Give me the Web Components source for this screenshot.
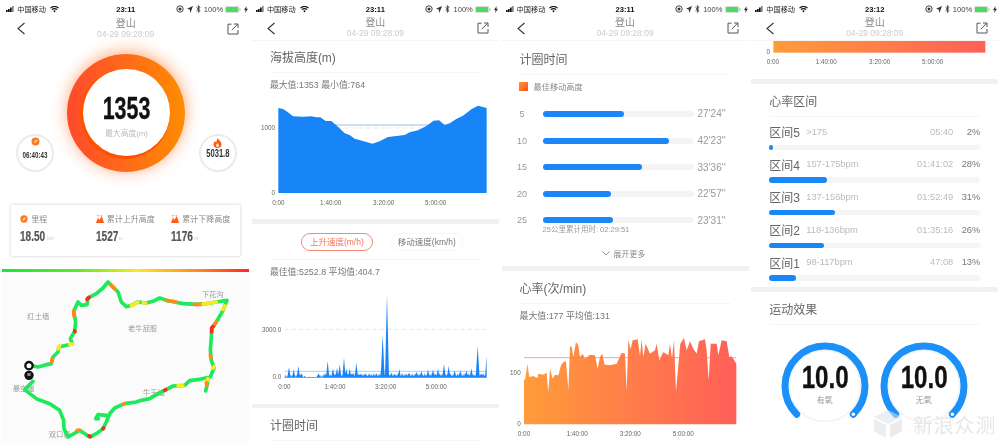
<!DOCTYPE html>
<html lang="zh">
<head>
<meta charset="utf-8">
<title>登山</title>
<style>
    html, body { margin: 0; height: 100%; background: #fff; overflow: hidden; }
    body { font-family: "Liberation Sans", "Noto Sans CJK SC", sans-serif; }
</style>
</head>
<body>
<workout-page>
    <phone-screen time="23:11">
        <summary-hero></summary-hero>
        <stat-card></stat-card>
        <route-map></route-map>
    </phone-screen>

    <phone-screen time="23:11" line>
        <section-head style="margin-top:-1px">海拔高度(m)</section-head>
        <stat-line>最大值:1353 最小值:764</stat-line>
        <chart-svg kind="altitude" vx="7" vy="294" vh="363"></chart-svg>
        <gray-band></gray-band>
        <speed-tabs></speed-tabs>
        <stat-line>最佳值:5252.8 平均值:404.7</stat-line>
        <chart-svg kind="speed" vx="7" vy="189" vh="358"></chart-svg>
        <gray-band></gray-band>
        <section-head>计圈时间</section-head>
    </phone-screen>

    <phone-screen time="23:11" line>
        <section-head style="margin-top:1px">计圈时间</section-head>
        <lap-legend>最佳移动高度</lap-legend>
        <div style="margin-top:3.7px">
            <lap-row km="5" pct="54" time="27'24''"></lap-row>
            <lap-row km="10" pct="84" time="42'23''"></lap-row>
            <lap-row km="15" pct="66" time="33'36''"></lap-row>
            <lap-row km="20" pct="45.5" time="22'57''"></lap-row>
            <lap-row km="25" pct="46.5" time="23'31''"></lap-row>
        </div>
        <lap-note>25公里累计用时: 02:29:51</lap-note>
        <more-link>展开更多</more-link>
        <gray-band></gray-band>
        <section-head>心率(次/min)</section-head>
        <stat-line>最大值:177 平均值:131</stat-line>
        <chart-svg kind="heart" vx="6" vy="321" vh="342"></chart-svg>
    </phone-screen>

    <phone-screen time="23:12" line>
        <chart-svg kind="strip" vx="4" vy="123" vh="114"></chart-svg>
        <gray-band></gray-band>
        <section-head>心率区间</section-head>
        <zone-row name="区间5" range="&gt;175" time="05:40" pct="2" fill="3.5"></zone-row>
        <zone-row name="区间4" range="157-175bpm" time="01:41:02" pct="28" fill="58"></zone-row>
        <zone-row name="区间3" range="137-156bpm" time="01:52:49" pct="31" fill="65.7"></zone-row>
        <zone-row name="区间2" range="118-136bpm" time="01:35:16" pct="26" fill="55"></zone-row>
        <zone-row name="区间1" range="98-117bpm" time="47:08" pct="13" fill="27"></zone-row>
        <gray-band style="margin-top:7.3px"></gray-band>
        <section-head>运动效果</section-head>
        <gauge-row></gauge-row>
    </phone-screen>
    <water-mark>新浪众测</water-mark>
</workout-page>

<script>
const NUM_FONT = `font-weight:700;color:#111;display:inline-block;-webkit-text-stroke:.35px #111;`;

class WorkoutPage extends HTMLElement{
    constructor(){
        super();
        this.attachShadow({mode: "open"});
        this.shadowRoot.innerHTML = `
            <style>
                :host{
                    display: flex;
                    gap: 2.7px;
                    padding-left: 2.2px;
                    width: 1000px;
                    height: 443px;
                    box-sizing: border-box;
                    overflow: hidden;
                    position: relative;
                    filter: blur(.35px);
                }
            </style>
            <slot></slot>
        `;
    }
}
customElements.define("workout-page", WorkoutPage);

class PhoneScreen extends HTMLElement{
    constructor(){
        super();
        this.attachShadow({mode: "open"});
        const line = this.hasAttribute("line") ? "border-bottom:1px solid #f5f5f5;" : "";
        this.shadowRoot.innerHTML = `
            <style>
                :host{
                    display: flex;
                    flex-direction: column;
                    flex: 0 0 247px;
                    width: 247px;
                    height: 443px;
                    overflow: hidden;
                }
                .status{
                    flex: 0 0 18px;
                    display: grid;
                    grid-template-columns: 1fr auto 1fr;
                    align-items: center;
                    font-size: 7.2px;
                    color: #222;
                }
                .left{ display: flex; align-items: center; padding-left: 4px; gap: 3px; }
                .clock{ font-weight: 700; font-size: 7.6px; color: #111; }
                .right{ display: flex; align-items: center; justify-content: flex-end; gap: 3px; padding-right: 1px; font-size: 7.6px; color: #444; }
                .nav{
                    flex: 0 0 23px;
                    box-sizing: border-box;
                    height: 23px;
                    display: grid;
                    grid-template-columns: 40px 1fr 40px;
                    align-items: center;
                    ${line}
                }
                .back{ padding-left: 14px; margin-top: -2px; }
                .share{ padding-left: 18px; margin-top: -2px; }
                .title{ text-align: center; line-height: 11px; margin-top: -2px; }
                .title b{ display: block; font-weight: 400; font-size: 10px; color: #888; }
                .title span{ display: block; font-size: 8.5px; line-height: 11px; color: #ccc; }
                svg{ display: block; }
            </style>
            <div class="status">
                <div class="left">
                    <svg width="8" height="6" viewBox="0 0 8 6"><path d="M0 4h1.700v2H0zM2 3h1.700v3H2zM4 1.500h1.700V6H4z" fill="#111"/><path d="M6 0h1.700v6H6z" fill="#888"/></svg>
                    <span>中国移动</span>
                    <svg style="margin-left:1px" width="9" height="7" viewBox="0 0 9 7"><path d="M.5 2.200a5.600 5.600 0 0 1 8 0M2 3.700a3.500 3.500 0 0 1 5 0" fill="none" stroke="#111" stroke-width="1.200"/><path d="M3.300 4.900a1.700 1.700 0 0 1 2.400 0L4.500 6.500z" fill="#111"/></svg>
                </div>
                <div class="clock">${this.getAttribute("time")}</div>
                <div class="right">
                    <svg width="8" height="8" viewBox="0 0 8 8"><circle cx="4" cy="4" r="3.200" fill="none" stroke="#333" stroke-width=".9"/><circle cx="4" cy="4" r="1.500" fill="#333"/></svg>
                    <svg width="6" height="7" viewBox="0 0 6 7"><path d="M6 0 3.400 7 2.700 3.500 0 2.800z" fill="#333"/></svg>
                    <svg width="5" height="8" viewBox="0 0 5 8"><path d="M.5 2.200 4 5.500 2.400 7.400V.6L4 2.500.5 5.800" fill="none" stroke="#333" stroke-width=".9"/></svg>
                    <span>100%</span>
                    <svg style="margin-left:-1px" width="16" height="7" viewBox="0 0 16 7"><rect x=".3" y=".3" width="13.600" height="6.400" rx="1.400" fill="#fff" stroke="#aaa" stroke-width=".5"/><rect x="1" y="1" width="12.200" height="5" rx=".8" fill="#4cd964"/><rect x="14.400" y="2.300" width="1" height="2.400" fill="#aaa"/></svg>
                    <svg width="4" height="7" viewBox="0 0 4 7"><path d="M2.600 0 0 4h1.500L1.200 7 4 2.800H2.300z" fill="#333"/></svg>
                </div>
            </div>
            <div class="nav">
                <div class="back"><svg width="10" height="13" viewBox="0 0 10 13"><path d="M8.500 1 2 6.500 8.500 12" fill="none" stroke="#333" stroke-width="1.100"/></svg></div>
                <div class="title"><b>登山</b><span>04-29 09:28:09</span></div>
                <div class="share"><svg width="12" height="12" viewBox="0 0 12 12"><path d="M4.500 1.200H1v9.800h10V7" fill="none" stroke="#555" stroke-width="1"/><path d="M4.800 7.200 10.500 1.300M7 1h4v4" fill="none" stroke="#555" stroke-width="1"/></svg></div>
            </div>
            <slot></slot>
        `;
    }
}
customElements.define("phone-screen", PhoneScreen);

class SummaryHero extends HTMLElement{
    constructor(){
        super();
        this.attachShadow({mode: "open"});
        this.shadowRoot.innerHTML = `
            <style>
                :host{
                    display: flex;
                    align-items: flex-end;
                    gap: 13.300px;
                    padding: 12.600px 0 0 14px;
                }
                .ring{
                    flex: 0 0 118px;
                    height: 118px;
                    border-radius: 50%;
                    background: linear-gradient(90deg, #ff4a2c, #ff6a18 50%, #ff8c00);
                    box-shadow: 0 0 16px rgba(255,110,40,.45), 2px -6px 14px rgba(255,170,110,.3);
                    display: flex;
                    align-items: center;
                    justify-content: center;
                }
                .inner{
                    width: 87px;
                    height: 87px;
                    border-radius: 50%;
                    background: #fff;
                    box-shadow: -1.500px 1.500px 0 1.500px #ff5200;
                    box-sizing: border-box;
                    padding-top: 23.700px;
                    text-align: center;
                }
                .num{ font-size: 31px; line-height: 32px; transform: scaleX(.69); ${NUM_FONT} }
                .lab{ font-size: 7.800px; line-height: 10px; color: #bbb; margin-top: 4px; }
                .mini{
                    flex: 0 0 38px;
                    width: 38px;
                    min-width: 0;
                    height: 38px;
                    box-sizing: border-box;
                    border: 2px solid #ebebeb;
                    border-radius: 50%;
                    background: #fff;
                    display: flex;
                    flex-direction: column;
                    align-items: center;
                    justify-content: center;
                    white-space: nowrap;
                }
                .mini span{ flex: none; font-weight: 700; color: #333; display: inline-block; transform: scaleX(.69); }
                .t{ font-size: 9px; line-height: 10px; margin-top: 3.500px; }
                .c{ font-size: 11px; line-height: 11px; }
                .up{ padding-bottom: 8px; }
                .up2{ padding-bottom: 9px; }
            </style>
            <div class="mini up">
                <svg width="9" height="9" viewBox="0 0 9 9"><circle cx="4.500" cy="4.500" r="4" fill="#ff7a1e"/><path d="M6.500 2.500 5 5.200 3 6l.9-2.300z" fill="#ffe2c8"/></svg>
                <span class="t">06:40:43</span>
            </div>
            <div class="ring">
                <div class="inner">
                    <span class="num">1353</span>
                    <div class="lab">最大高度(m)</div>
                </div>
            </div>
            <div class="mini up2">
                <svg width="9" height="10" viewBox="0 0 9 10"><path d="M4.800 0C5.300 2 8.500 3.400 8.500 6.300A4 3.700 0 0 1 .5 6.300C.5 4.800 1.400 3.800 2 3c.4.800.7 1.200 1.200 1.400C3.400 3 3.900 1.300 4.800 0Z" fill="#ff5a1e"/><path d="M4.500 5c.4.800 1.500 1.200 1.500 2.500a1.500 1.500 0 0 1-3 0C3 6.400 4 6 4.500 5Z" fill="#ffe0c0"/></svg>
                <span class="c">5031.8</span>
            </div>
        `;
    }
}
customElements.define("summary-hero", SummaryHero);

class StatCard extends HTMLElement{
    constructor(){
        super();
        this.attachShadow({mode: "open"});
        const peak = `<svg width="8" height="8" viewBox="0 0 8 8"><path d="M0 8 2 2.500 3.400 5 4 4 5.800 1 8 8Z" fill="#ff5a14"/><path d="M.5 0 2 2 3 0ZM4 0l1 1.500L6.500 0Z" fill="#ff9a30" opacity=".8"/></svg>`;
        const item = (icon, label, value, unit, w) => `
            <div class="item">
                <div class="label">${icon}<span>${label}</span></div>
                <div class="value"><b style="width:${w}px">${value}</b><i>${unit}</i></div>
            </div>`;
        this.shadowRoot.innerHTML = `
            <style>
                :host{
                    display: grid;
                    grid-template-columns: 75.500px 75.500px 1fr;
                    flex: none;
                    margin: 33.400px 9px 0;
                    height: 51px;
                    box-sizing: border-box;
                    padding: 9px 0 0 9px;
                    background: #fff;
                    box-shadow: 0 0 3px rgba(0,0,0,.22);
                }
                .label{ display: flex; align-items: center; gap: 3px; font-size: 8px; line-height: 11px; color: #888; white-space: nowrap; }
                .value{ margin-top: 4px; line-height: 14px; white-space: nowrap; display: flex; align-items: flex-end; }
                b{ display: inline-block; font-size: 14px; color: #555; transform: scaleX(.72); transform-origin: left; -webkit-text-stroke: .2px #555; }
                i{ font-style: normal; font-size: 5px; line-height: 10px; color: #ccc; margin-left: 1px; }
            </style>
            ${item(`<svg width="8" height="8" viewBox="0 0 8 8"><circle cx="4" cy="4" r="3.700" fill="#ff7a1e"/><path d="M5.800 2.200 4.600 4.700 2.400 5.700l.9-2.300z" fill="#ffe2c8"/></svg>`, "里程", "18.50", "km", 26)}
            ${item(peak, "累计上升高度", "1527", "m", 22)}
            ${item(peak, "累计下降高度", "1176", "m", 22)}
        `;
    }
}
customElements.define("stat-card", StatCard);

class RouteMap extends HTMLElement{
    constructor(){
        super();
        this.attachShadow({mode: "open"});
        const route = "100,432 115,435 140,428 155,425 160,405 175,390 178,375 200,370 218,366 212,350 225,328 228,300 222,268 235,240 245,250 262,248 265,228 290,215 310,198 325,180 340,195 355,210 365,240 380,254 395,250 415,240 440,243 460,238 480,228 500,235 525,240 550,245 590,247 620,245 650,240 682,235 670,265 650,300 636,320 635,345 632,385 635,415 643,438 632,465 600,472 570,476 555,490 520,492 495,505 475,515 450,530 425,535 410,540 375,545 345,558 330,575 320,600 310,620 290,635 270,645 240,625 205,645 193,620 192,595 180,565 150,545 110,530 75,503 100,478";
        // bits of the track where the pace colour changes
        const marks = [
            ["#ff2a1a", "262,232 268,226"], ["#ff2a1a", "636,330 636,318 643,310"], ["#ff2a1a", "495,505 498,503"],
            ["#ff2a1a", "225,327 226,329"], ["#ff2a1a", "310,620 312,618"], ["#ff2a1a", "268,642 272,644"],
            ["#ff8a1a", "335,190 345,200"], ["#ff8a1a", "520,238 530,241"], ["#ff8a1a", "585,247 605,247"], ["#ff8a1a", "650,300 645,306"],
            ["#ff8a1a", "158,410 156,420"], ["#ff8a1a", "632,400 634,408"], ["#ff8a1a", "375,545 370,547"], ["#ff8a1a", "222,268 223,282"],
            ["#ffe81a", "610,246 650,240"], ["#ffe81a", "395,250 415,241"], ["#ffe81a", "430,242 438,243"], ["#ffe81a", "535,490 550,492"],
            ["#ffe81a", "640,438 643,434"], ["#ffe81a", "670,262 676,252"], ["#ffe81a", "210,367 218,366"], ["#ffe81a", "175,380 180,372"],
            ["#ffe81a", "620,480 625,470"], ["#ff8a1a", "622,490 620,482"], ["#ff8a1a", "500,235 510,237"], ["#ff8a1a", "232,625 240,625"]
        ];
        const label = (x, y, t) => `<text x="${x}" y="${y}">${t}</text>`;
        this.shadowRoot.innerHTML = `
            <style>
                :host{ display: block; flex: none; padding-top: 13.300px; }
                .legend{ height: 2.500px; background: linear-gradient(90deg, #14e83a, #5ee82a 30%, #ffe81a 55%, #ff8f1a 78%, #ff2626); }
                svg{ display: block; background: #fbfbfb; }
                text{ font-size: 22px; fill: #999; font-family: "Liberation Sans", "Noto Sans CJK SC", sans-serif; }
                polyline{ fill: none; stroke-linecap: round; stroke-linejoin: round; stroke-width: 11; }
            </style>
            <div class="legend"></div>
            <svg width="247" height="171" viewBox="7 150 741 513">
                ${label(83, 292, "红土墙")}
                ${label(385, 326, "老牛屁股")}
                ${label(606, 224, "下花沟")}
                ${label(39, 506, "悬空崖")}
                ${label(430, 519, "牛玉崖")}
                ${label(147, 646, "双口窑")}
                <polyline points="${route}" stroke="#1dea5a"/>
                <polyline points="625,468 622,490 618,507" stroke="#1dea5a"/>
                <polyline points="320,580 295,578 288,590 296,590" stroke="#1dea5a"/>
                ${marks.map(m => `<polyline points="${m[1]}" stroke="${m[0]}"/>`).join("")}
                <circle cx="88" cy="431" r="11" fill="#fff" stroke="#111" stroke-width="7"/>
                <circle cx="88" cy="460" r="14" fill="#111"/>
                <rect x="83" y="453" width="10" height="9" fill="#888"/>
            </svg>
        `;
    }
}
customElements.define("route-map", RouteMap);

class SectionHead extends HTMLElement{
    constructor(){
        super();
        this.attachShadow({mode: "open"});
        this.shadowRoot.innerHTML = `
            <style>
                :host{
                    display: block;
                    flex: none;
                    box-sizing: border-box;
                    height: 33px;
                    margin: 0 18px;
                    padding-top: 10px;
                    line-height: 16px;
                    font-size: 12px;
                    color: #666;
                    border-bottom: 1px solid #f6f6f6;
                }
            </style>
            <slot></slot>
        `;
    }
}
customElements.define("section-head", SectionHead);

class StatLine extends HTMLElement{
    constructor(){
        super();
        this.attachShadow({mode: "open"});
        this.shadowRoot.innerHTML = `
            <style>
                :host{ display: block; flex: none; height: 25px; line-height: 25px; padding-left: 18px; font-size: 8.900px; color: #777; }
            </style>
            <slot></slot>
        `;
    }
}
customElements.define("stat-line", StatLine);

class GrayBand extends HTMLElement{
    constructor(){
        super();
        this.attachShadow({mode: "open"});
        this.shadowRoot.innerHTML = `
            <style>
                :host{ display: block; flex: none; height: 4.500px; background: #f1f1f1; }
            </style>
        `;
    }
}
customElements.define("gray-band", GrayBand);

class SpeedTabs extends HTMLElement{
    constructor(){
        super();
        this.attachShadow({mode: "open"});
        this.shadowRoot.innerHTML = `
            <style>
                :host{
                    display: flex;
                    flex: none;
                    gap: 18px;
                    height: 36px;
                    box-sizing: border-box;
                    margin: 0 18px;
                    padding: 9px 0 0 31px;
                    border-bottom: 1px solid #f6f6f6;
                }
                div{
                    box-sizing: border-box;
                    width: 72px;
                    height: 18px;
                    line-height: 16px;
                    border-radius: 9px;
                    text-align: center;
                    font-size: 8.500px;
                    border: 1px solid #f6f6f6;
                    color: #777;
                    white-space: nowrap;
                }
                .on{ border-color: #f28a78; color: #f4735c; }
            </style>
            <div class="on">上升速度(m/h)</div>
            <div>移动速度(km/h)</div>
        `;
    }
}
customElements.define("speed-tabs", SpeedTabs);

class ChartSvg extends HTMLElement{
    constructor(){
        super();
        this.attachShadow({mode: "open"});
        const kind = this.getAttribute("kind");
        const vx = this.getAttribute("vx"), vy = +this.getAttribute("vy"), vh = +this.getAttribute("vh");
        this.shadowRoot.innerHTML = `
            <style>
                :host{ display: block; flex: none; }
                svg{ display: block; }
                text{ font-size: 19px; fill: #666; font-family: "Liberation Sans", "Noto Sans CJK SC", sans-serif; text-anchor: middle; }
                .y{ text-anchor: end; }
            </style>
            <svg width="247" height="${vh / 3}" viewBox="${vx} ${vy} 741 ${vh}">${this[kind]()}</svg>
        `;
    }
    ticks(y, xs){
        const names = ["0:00", "1:40:00", "3:20:00", "5:00:00"];
        return xs.map((x, i) => `<text x="${x}" y="${y}">${names[i]}</text>`).join("");
    }
    heartFill(){
        return `<linearGradient id="hr" x1="0" x2="1" y1="0" y2="0"><stop offset="0" stop-color="#ff9c3a"/><stop offset="1" stop-color="#ff5f58"/></linearGradient>`;
    }
    altitude(){
        const top = "86,324 100,327 115,337 130,349 160,350 185,349 200,352 212,352 228,363 245,363 265,380 285,400 300,405 315,416 340,423 368,431 390,424 415,411 440,408 465,405 480,397 505,391 530,378 552,362 568,361 585,375 600,370 620,357 640,347 665,328 685,317 711,324";
        return `
            <line x1="86" x2="711" y1="375" y2="375" stroke="#b8d4f2" stroke-width="4"/>
            <line x1="86" x2="711" y1="384" y2="384" stroke="#ddd" stroke-width="2" stroke-dasharray="12 10"/>
            <polygon points="86,579 ${top} 711,579" fill="#1784f8"/>
            <text class="y" x="76" y="389">1000</text>
            <text class="y" x="76" y="584">0</text>
            ${this.ticks(614, [86, 243, 402, 558])}
        `;
    }
    speed(){
        const peaks = [[118,32],[132,25],[146,35],[155,14],[165,5],[180,3],[207,13],[234,50],[250,28],[262,30],[270,40],[283,60],[290,28],[300,28],[310,15],[320,45],[332,12],[345,10],[360,9],[380,10],[399,128],[412,250],[425,15],[435,8],[449,26],[478,15],[500,18],[515,20],[535,25],[550,25],[565,28],[583,42],[597,35],[615,22],[632,22],[650,22],[665,28],[684,95],[695,12],[711,65]];
        let d = "M105 467";
        for(let x = 105; x <= 711; x += 1){
            let h = x * 37 % 11;
            if(x > 160 && x < 200) h = 2;
            if(x * 13 % 23 < 3) h = 0;
            if(x > 220) h += 4;
            for(const p of peaks){
                const w = p[1] > 90 ? 6 : 5;
                const v = p[1] * (1 - Math.abs(x - p[0]) / w);
                if(v > h) h = v;
            }
            d += `L${x} ${467 - h}`;
        }
        d += "L711 467Z";
        return `
            <line x1="105" x2="711" y1="322" y2="322" stroke="#ddd" stroke-width="2" stroke-dasharray="12 10"/>
            <line x1="105" x2="711" y1="448" y2="448" stroke="#a9cff7" stroke-width="3"/>
            <path d="${d}" fill="#1784f8"/>
            <text class="y" x="95" y="329">3000.0</text>
            <text class="y" x="95" y="472">0.0</text>
            ${this.ticks(502, [104, 256, 408, 560])}
        `;
    }
    heart(){
        const top = "72,475 76,470 82,425 88,465 100,462 112,468 115,455 130,458 140,452 145,510 150,440 158,470 165,458 175,460 183,430 190,420 198,418 205,505 210,373 215,375 220,405 228,360 235,370 240,405 248,395 255,410 270,398 285,400 293,440 300,405 307,395 314,428 330,430 350,425 365,392 375,395 380,508 385,355 392,382 398,355 413,352 420,402 425,352 430,405 437,365 450,395 465,385 470,365 478,415 490,390 505,400 510,365 516,410 522,355 528,510 535,430 541,365 552,348 560,385 570,358 580,380 590,395 597,358 615,352 620,385 626,475 632,365 650,365 655,400 665,355 680,358 688,405 695,403 709,425";
        return `
            <defs>${this.heartFill()}</defs>
            <polygon points="72,607 ${top} 709,607" fill="url(#hr)"/>
            <line x1="72" x2="709" y1="407" y2="407" stroke="#f0796a" stroke-width="2"/>
            <text class="y" x="62" y="458">100</text>
            <text class="y" x="62" y="612">0</text>
            ${this.ticks(643, [72, 232, 391, 550])}
        `;
    }
    strip(){
        return `
            <defs>${this.heartFill()}</defs>
            <rect x="71" y="123" width="636" height="35" fill="url(#hr)"/>
            <text class="y" x="61" y="162">0</text>
            ${this.ticks(193, [70, 230, 390, 549])}
        `;
    }
}
customElements.define("chart-svg", ChartSvg);

class LapLegend extends HTMLElement{
    constructor(){
        super();
        this.attachShadow({mode: "open"});
        this.shadowRoot.innerHTML = `
            <style>
                :host{ display: flex; flex: none; align-items: center; gap: 6px; height: 22px; padding-left: 17px; font-size: 8.200px; color: #888; }
                i{ width: 9px; height: 9px; background: linear-gradient(135deg, #ff9a1e, #ff4f2a); }
            </style>
            <i></i><slot></slot>
        `;
    }
}
customElements.define("lap-legend", LapLegend);

class LapRow extends HTMLElement{
    constructor(){
        super();
        this.attachShadow({mode: "open"});
        this.shadowRoot.innerHTML = `
            <style>
                :host{
                    display: grid;
                    grid-template-columns: 41px 151px 1fr;
                    align-items: center;
                    height: 26.600px;
                    font-size: 9px;
                    color: #999;
                }
                .km{ text-align: center; }
                .track{ height: 6px; border-radius: 3px; background: #f4f4f4; }
                .fill{ height: 6px; border-radius: 3px; background: #1b86f5; width: ${this.getAttribute("pct")}%; }
                .time{ padding-left: 4px; font-size: 10px; color: #999; white-space: nowrap; }
            </style>
            <div class="km">${this.getAttribute("km")}</div>
            <div class="track"><div class="fill"></div></div>
            <div class="time">${this.getAttribute("time")}</div>
        `;
    }
}
customElements.define("lap-row", LapRow);

class LapNote extends HTMLElement{
    constructor(){
        super();
        this.attachShadow({mode: "open"});
        this.shadowRoot.innerHTML = `
            <style>
                :host{ display: block; flex: none; height: 10px; line-height: 10px; margin-top: -8.700px; padding-left: 41px; font-size: 7.500px; color: #999; }
            </style>
            <slot></slot>
        `;
    }
}
customElements.define("lap-note", LapNote);

class MoreLink extends HTMLElement{
    constructor(){
        super();
        this.attachShadow({mode: "open"});
        this.shadowRoot.innerHTML = `
            <style>
                :host{ display: flex; flex: none; align-items: center; gap: 4px; height: 20px; margin: 9px 0 2.300px; padding-left: 100px; font-size: 7.800px; letter-spacing: .2px; color: #888; }
            </style>
            <svg width="8" height="5" viewBox="0 0 8 5"><path d="M.5.5 4 4 7.500.5" fill="none" stroke="#777" stroke-width=".8"/></svg>
            <slot></slot>
        `;
    }
}
customElements.define("more-link", MoreLink);

class ZoneRow extends HTMLElement{
    constructor(){
        super();
        this.attachShadow({mode: "open"});
        this.shadowRoot.innerHTML = `
            <style>
                :host{ display: block; flex: none; height: 32.700px; margin: 0 18px; box-sizing: border-box; padding-top: 5px; }
                .line{ display: flex; align-items: center; height: 20px; white-space: nowrap; color: #bbb; font-size: 9.300px; }
                .name{ width: 37px; font-size: 12px; color: #666; }
                .time{ margin-left: auto; }
                .pct{ width: 27px; text-align: right; color: #777; }
                .track{ height: 5.500px; margin-top: 3px; border-radius: 3px; background: #f5f5f5; }
                .fill{ height: 5.500px; border-radius: 3px; background: #1b86f5; width: ${this.getAttribute("fill")}px; }
            </style>
            <div class="line">
                <span class="name">${this.getAttribute("name")}</span>
                <span>${this.getAttribute("range")}</span>
                <span class="time">${this.getAttribute("time")}</span>
                <span class="pct">${this.getAttribute("pct")}%</span>
            </div>
            <div class="track"><div class="fill"></div></div>
        `;
    }
}
customElements.define("zone-row", ZoneRow);

class GaugeRow extends HTMLElement{
    constructor(){
        super();
        this.attachShadow({mode: "open"});
        const gauge = (value, name) => `
            <div class="gauge">
                <svg width="90" height="90" viewBox="0 0 90 90">
                    <circle cx="45" cy="45" r="35.500" fill="#fff" stroke="#f3f3f3" stroke-width="1.500"/>
                    <path d="M16.700 73.300A40 40 0 1 1 73.300 73.300" fill="none" stroke="#1b90f8" stroke-width="7" stroke-linecap="round"/>
                    <circle cx="73.300" cy="73.300" r="2.400" fill="#fff" stroke="#1b90f8" stroke-width="1.200"/>
                </svg>
                <div class="text">
                    <span class="num">${value}</span>
                    <div class="lab">${name}</div>
                </div>
            </div>`;
        this.shadowRoot.innerHTML = `
            <style>
                :host{ display: flex; flex: none; gap: 9px; padding: 16px 0 0 28.600px; }
                .gauge{ display: grid; width: 90px; height: 90px; }
                .gauge > *{ grid-area: 1 / 1; }
                svg{ display: block; }
                .text{ text-align: center; padding-top: 21.700px; }
                .num{ font-size: 31px; line-height: 32px; transform: scaleX(.78); ${NUM_FONT} }
                .lab{ font-size: 8px; line-height: 10px; color: #999; margin-top: 1.500px; }
            </style>
            ${gauge("10.0", "有氧")}
            ${gauge("10.0", "无氧")}
        `;
    }
}
customElements.define("gauge-row", GaugeRow);

class WaterMark extends HTMLElement{
    constructor(){
        super();
        this.attachShadow({mode: "open"});
        this.shadowRoot.innerHTML = `
            <style>
                :host{
                    position: absolute;
                    left: 873px;
                    top: 409px;
                    display: flex;
                    align-items: center;
                    gap: 10px;
                    height: 30px;
                    font-size: 20px;
                    letter-spacing: .8px;
                    color: rgba(215,215,215,.6);
                    white-space: nowrap;
                }
            </style>
            <svg width="30" height="28" viewBox="0 0 30 28">
                <path d="M15 0 29 7 15 14 1 7Z" fill="rgba(215,225,235,.55)"/>
                <path d="M1 9 13 15V28L1 21Z" fill="rgba(215,215,215,.45)"/>
                <path d="M17 15 29 9V21L17 28Z" fill="rgba(215,215,215,.5)"/>
            </svg>
            <slot></slot>
        `;
    }
}
customElements.define("water-mark", WaterMark);
</script>
</body>
</html>
